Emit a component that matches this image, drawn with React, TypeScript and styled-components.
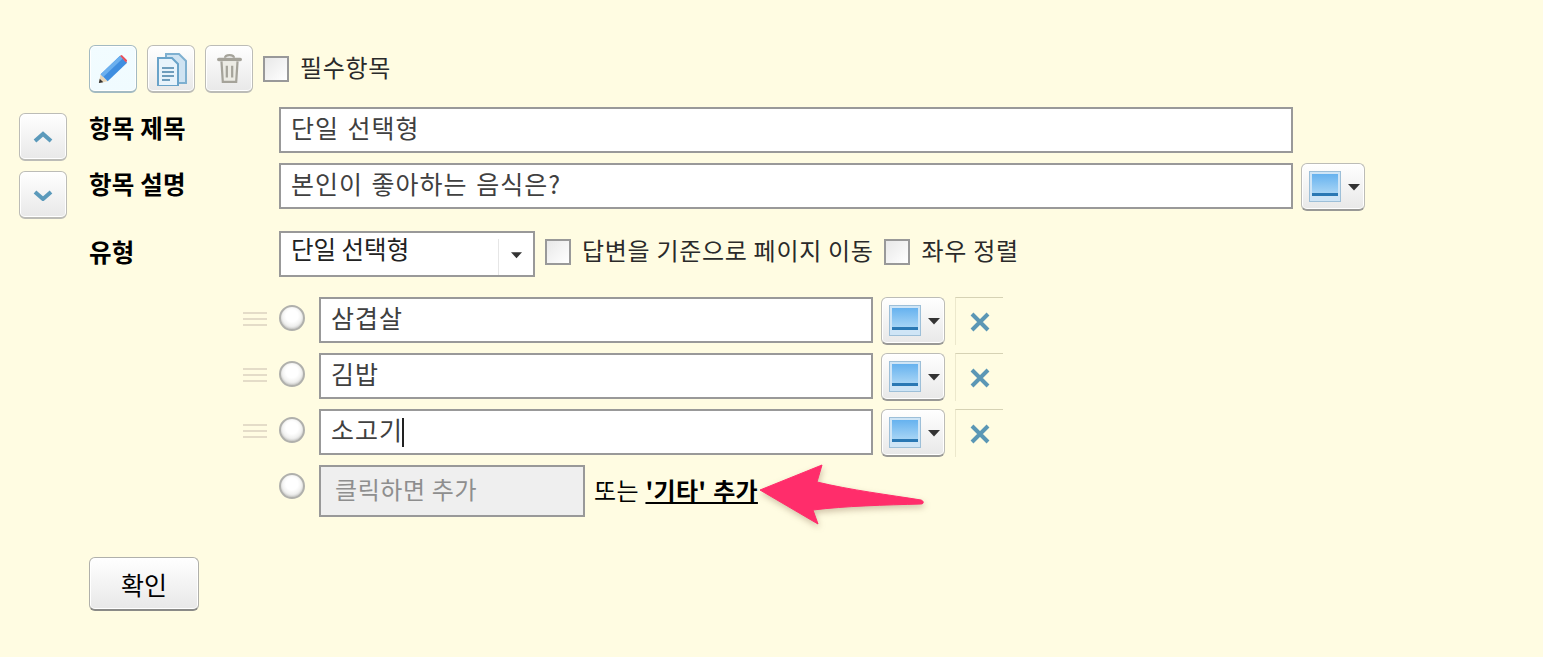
import React from 'react';
import styled, { createGlobalStyle } from 'styled-components';

const GlobalStyle = createGlobalStyle`
  html, body {
    margin: 0;
    padding: 0;
    background: #fffce2;
  }
  body {
    font-family: "Noto Sans CJK KR", "Liberation Sans", sans-serif;
    color: #000;
  }
`;

const Caret = () => (
  <svg width="12" height="8" viewBox="0 0 12 8">
    <path d="M0 1h12L6 7.500z" fill="#333" />
  </svg>
);

const SwatchIcon = () => (
  <svg width="32" height="31" viewBox="0 0 32 31">
    <defs>
      <linearGradient id="swatchFill" x1="0" y1="0" x2="0" y2="1">
        <stop offset="0" stopColor="#66b2ef" />
        <stop offset="1" stopColor="#a6d4f5" />
      </linearGradient>
    </defs>
    <rect x="0.500" y="0.500" width="31" height="30" fill="#cfe5f6" stroke="#9dbfd8" />
    <rect x="3" y="3" width="26" height="19" fill="url(#swatchFill)" />
    <rect x="3" y="22" width="26" height="3" fill="#2a78b4" />
  </svg>
);

const PencilIcon = () => (
  <svg width="30" height="30" viewBox="0 0 34 34">
    <path d="M1 33l2-10 8 8z" fill="#e8d6b8" />
    <path d="M1 33l1-5 4 4z" fill="#333" />
    <path d="M3 23L25 2l8 8-22 21z" fill="#3f8ee0" />
    <path d="M3 23L25 2l3 3L6 26z" fill="#6cb0ee" />
    <path d="M25 2l2-1 6 6-1 3z" fill="#e8505a" />
  </svg>
);

const CopyIcon = () => (
  <svg width="34" height="34" viewBox="0 0 34 34">
    <path d="M12 2h13l7 7v22H12z" fill="#cfe3f2" stroke="#7fb0d0" strokeWidth="2" />
    <path d="M4 6h14l6 6v22H4z" fill="#e8f3fb" stroke="#6aa3c9" strokeWidth="2" />
    <path d="M8 16h12M8 20h12M8 24h12M8 28h8" stroke="#6f9dbc" strokeWidth="2" />
  </svg>
);

const TrashIcon = () => (
  <svg width="25" height="31" viewBox="0 0 28 34">
    <path d="M2 7h24" stroke="#a5a39a" strokeWidth="4" strokeLinecap="round" />
    <path d="M9 5c0-4 10-4 10 0" fill="none" stroke="#a5a39a" strokeWidth="2.500" />
    <path d="M5 9l1.500 23h15L23 9" fill="#ecebe4" stroke="#a5a39a" strokeWidth="2.500" />
    <path d="M11 14v13M17 14v13" stroke="#a5a39a" strokeWidth="2.500" />
  </svg>
);

const ChevronIcon = ({ down }: { down?: boolean }) => (
  <svg width="20" height="12" viewBox="0 0 20 12">
    <path
      d={down ? 'M2 3l8 7 8-7' : 'M2 10l8-7 8 7'}
      fill="none"
      stroke="#5b9abb"
      strokeWidth="4"
    />
  </svg>
);

const CloseIcon = () => (
  <svg width="20" height="20" viewBox="0 0 20 20">
    <path d="M2 2l16 16M18 2L2 18" stroke="#5b97b5" strokeWidth="4" />
  </svg>
);

const PinkArrow = () => (
  <svg width="180" height="75" viewBox="0 0 180 75">
    <path
      d="M5 30L67 5L62 22C95 30 135 35 166 40C169 41 169 44 166 44C130 45 90 46 58 50L63 64z"
      fill="#ff2d6b"
      stroke="#ff2d6b"
      strokeLinejoin="round"
    />
  </svg>
);

const Page = styled.div`
  position: relative;
  box-sizing: border-box;
  width: 1543px;
  height: 657px;
  padding: 45px 0 0 19px;
  display: flex;
  gap: 22px;
  overflow: hidden;
  background: #fffce2;
`;

const MoveColumn = styled.div`
  display: flex;
  flex-direction: column;
  gap: 10px;
  padding-top: 68px;
`;

const RaisedButton = styled.button`
  box-sizing: border-box;
  display: flex;
  align-items: center;
  justify-content: center;
  padding: 0;
  border: 1px solid #bcbcb7;
  border-bottom: 2px solid #999996;
  border-radius: 6px;
  background: linear-gradient(#ffffff, #e8e8e8);
  box-shadow: inset 0 0 0 1px #fff;
  color: #000;
  font-family: inherit;
`;

const SquareButton = styled(RaisedButton)<{ $active?: boolean }>`
  width: 48px;
  height: 48px;
  background: ${(p) => (p.$active ? 'linear-gradient(#f2fcff, #f0fbff)' : 'linear-gradient(#ffffff, #e8e8e8)')};
  border-color: ${(p) => (p.$active ? '#a3bac2' : '#bcbcb7')};
`;

const ColorButton = styled(RaisedButton)`
  flex: none;
  width: 64px;
  height: 48px;
  gap: 7px;
  padding-left: 3px;
`;

const Main = styled.div`
  flex: 1;
  display: flex;
  flex-direction: column;
`;

const Toolbar = styled.div`
  display: flex;
  align-items: center;
  gap: 10px;
  height: 48px;
  margin-bottom: 14px;
`;

const CheckBox = styled.span`
  flex: none;
  box-sizing: border-box;
  display: block;
  width: 26px;
  height: 26px;
  border: 2px solid #999;
  background: linear-gradient(135deg, #e8e8e8, #ffffff);
`;

const CheckLabel = styled.span<{ $gap?: number }>`
  font-size: 24px;
  line-height: 30px;
  letter-spacing: 0.7px;
  color: #2a2a2a;
  margin: -4px 0 0 ${(p) => p.$gap ?? 0}px;
  white-space: nowrap;
`;

const FieldRow = styled.div`
  display: flex;
  align-items: flex-start;
  gap: 8px;
  height: 56px;
`;

const FieldLabel = styled.span`
  flex: none;
  width: 182px;
  font-size: 24.500px;
  font-weight: 700;
  line-height: 42px;
  letter-spacing: 0.2px;
`;

const TextBox = styled.div<{ $width: number; $muted?: boolean }>`
  flex: none;
  box-sizing: border-box;
  width: ${(p) => p.$width}px;
  height: ${(p) => (p.$muted ? 52 : 46)}px;
  padding: 0 10px;
  border: 2px solid #999;
  background: #fff;
  color: #404040;
  font-size: 25px;
  line-height: 36px;
  letter-spacing: 1px;
  word-spacing: 2px;
  white-space: nowrap;
`;

const MutedBox = styled(TextBox)`
  padding-left: 14px;
  background: #efefef;
  color: #8e8e8e;
  font-size: 24px;
  line-height: 44px;
  letter-spacing: 0.6px;
  word-spacing: 0;
`;

const TextCaret = styled.span`
  display: inline-block;
  width: 2px;
  height: 29px;
  margin-left: -1px;
  background: #222;
  vertical-align: -7px;
`;

const TypeRow = styled.div`
  display: flex;
  align-items: flex-start;
  height: 66px;
  margin-top: 12px;
`;

const TypeLabel = styled(FieldLabel)`
  width: 190px;
`;

const SelectBox = styled.div`
  flex: none;
  box-sizing: border-box;
  display: flex;
  width: 256px;
  height: 46px;
  border: 2px solid #999;
  background: #fff;
`;

const SelectText = styled.span`
  flex: 1;
  padding-left: 10px;
  font-size: 24.500px;
  line-height: 32px;
  letter-spacing: 0;
  color: #222;
`;

const SelectCaret = styled.span`
  flex: none;
  display: flex;
  align-items: center;
  justify-content: center;
  width: 34px;
  height: 36px;
  margin-top: 6px;
  border-left: 1px solid #e6e6e6;
  svg {
    width: 11px;
    margin-top: -4px;
  }
`;

const TypeOptions = styled.div`
  display: flex;
  align-items: center;
  gap: 10px;
  height: 42px;
  margin-left: 10px;
`;

const OptionList = styled.div`
  display: flex;
  flex-direction: column;
  gap: 10px;
  padding-left: 154px;
`;

const OptionRow = styled.div`
  display: flex;
  align-items: flex-start;
  height: 46px;
`;

const Handle = styled.span`
  flex: none;
  box-sizing: border-box;
  width: 24px;
  height: 14px;
  margin: 15px 12px 0 0;
  border-top: 2px solid #e4dcc8;
  border-bottom: 2px solid #e4dcc8;
  background: linear-gradient(#e4dcc8, #e4dcc8) center / 100% 2px no-repeat;
`;

const Radio = styled.span<{ $top: number; $indent?: number }>`
  flex: none;
  box-sizing: border-box;
  width: 26px;
  height: 26px;
  margin: ${(p) => p.$top}px 14px 0 ${(p) => p.$indent ?? 0}px;
  border: 2px solid #b0b0ac;
  border-radius: 50%;
  background: radial-gradient(circle at 50% 40%, #ffffff 35%, #d8d8d5 100%);
  box-shadow: inset 0 -1px 2px rgba(0, 0, 0, 0.15);
`;

const RemoveCell = styled.span`
  flex: none;
  box-sizing: border-box;
  display: flex;
  align-items: center;
  justify-content: center;
  width: 48px;
  height: 48px;
  margin-left: 10px;
  border-top: 1px solid #d6d2b4;
  border-left: 1px solid #ece8cc;
`;

const OptionColor = styled(ColorButton)`
  margin-left: 8px;
`;

const AddRow = styled.div`
  display: flex;
  align-items: flex-start;
  height: 52px;
`;

const AddHint = styled.span`
  margin: 10px 0 0 9px;
  font-size: 24px;
  line-height: 30px;
  letter-spacing: 0.3px;
  word-spacing: 1px;
  white-space: nowrap;
`;

const AddLink = styled.a`
  font-weight: 700;
  color: #000;
  text-decoration: underline;
`;

const ConfirmButton = styled(RaisedButton)`
  width: 110px;
  height: 54px;
  margin-top: 40px;
  font-size: 25px;
  border-color: #b0b0ab;
  border-bottom-color: #8a8a87;
`;

const ArrowOverlay = styled.div`
  position: absolute;
  left: 755px;
  top: 460px;
  line-height: 0;
  filter: drop-shadow(1px 3px 3px rgba(120, 90, 60, 0.35));
`;

const options = ['삼겹살', '김밥', '소고기'];

const ColorPicker = ({ as: Button = ColorButton }: { as?: typeof ColorButton }) => (
  <Button>
    <SwatchIcon />
    <Caret />
  </Button>
);

export default function App() {
  return (
    <Page>
      <GlobalStyle />
      <MoveColumn>
        <SquareButton>
          <ChevronIcon />
        </SquareButton>
        <SquareButton>
          <ChevronIcon down />
        </SquareButton>
      </MoveColumn>
      <Main>
        <Toolbar>
          <SquareButton $active>
            <PencilIcon />
          </SquareButton>
          <SquareButton>
            <CopyIcon />
          </SquareButton>
          <SquareButton>
            <TrashIcon />
          </SquareButton>
          <CheckBox />
          <CheckLabel $gap={1}>필수항목</CheckLabel>
        </Toolbar>
        <FieldRow>
          <FieldLabel>항목 제목</FieldLabel>
          <TextBox $width={1014}>단일 선택형</TextBox>
        </FieldRow>
        <FieldRow>
          <FieldLabel>항목 설명</FieldLabel>
          <TextBox $width={1014}>본인이 좋아하는 음식은?</TextBox>
          <ColorPicker />
        </FieldRow>
        <TypeRow>
          <TypeLabel>유형</TypeLabel>
          <SelectBox>
            <SelectText>단일 선택형</SelectText>
            <SelectCaret>
              <Caret />
            </SelectCaret>
          </SelectBox>
          <TypeOptions>
            <CheckBox />
            <CheckLabel $gap={1}>답변을 기준으로 페이지 이동</CheckLabel>
            <CheckBox />
            <CheckLabel $gap={2}>좌우 정렬</CheckLabel>
          </TypeOptions>
        </TypeRow>
        <OptionList>
          {options.map((label, i) => (
            <OptionRow key={label}>
              <Handle />
              <Radio $top={8} />
              <TextBox $width={554}>
                {label}
                {i === options.length - 1 && <TextCaret />}
              </TextBox>
              <ColorPicker as={OptionColor} />
              <RemoveCell>
                <CloseIcon />
              </RemoveCell>
            </OptionRow>
          ))}
          <AddRow>
            <Radio $top={8} $indent={36} />
            <MutedBox $width={266} $muted>
              클릭하면 추가
            </MutedBox>
            <AddHint>
              또는 <AddLink>'기타' 추가</AddLink>
            </AddHint>
          </AddRow>
        </OptionList>
        <ConfirmButton>확인</ConfirmButton>
      </Main>
      <ArrowOverlay>
        <PinkArrow />
      </ArrowOverlay>
    </Page>
  );
}
